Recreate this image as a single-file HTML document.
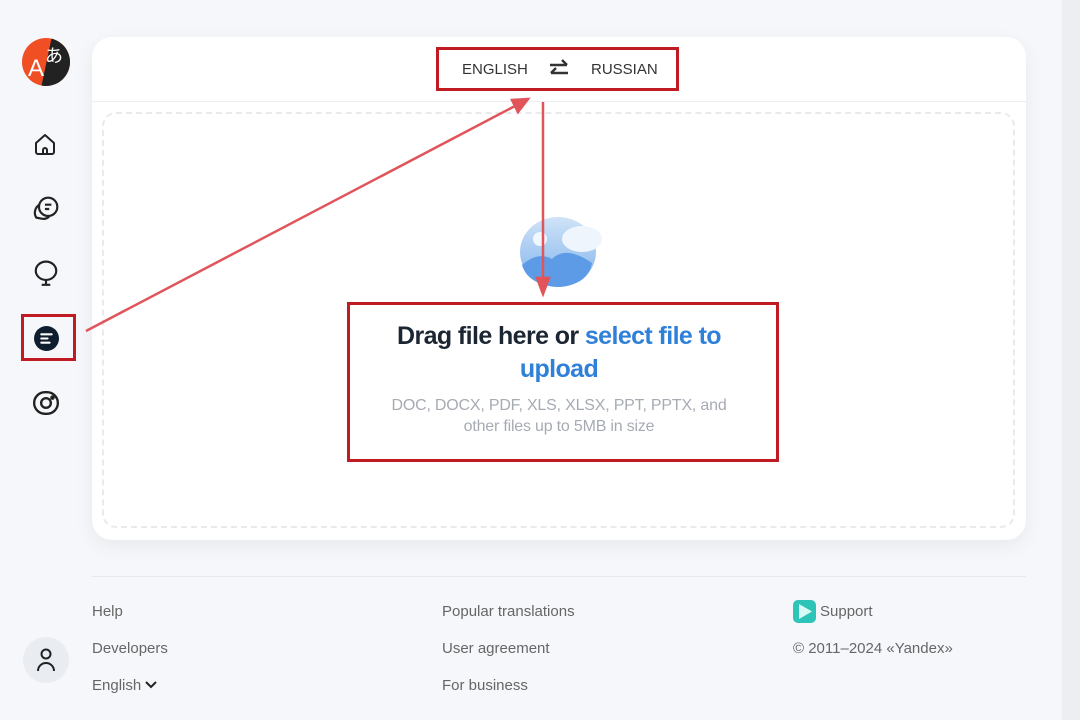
<!DOCTYPE html>
<html><head><meta charset="utf-8"><style>
body{margin:0;width:1080px;height:720px;background:#f5f7fa;font-family:"Liberation Sans",sans-serif;position:relative;overflow:hidden}
.sb{position:absolute;left:1062px;top:0;width:18px;height:720px;background:#eceef1}
.card{position:absolute;left:92px;top:37px;width:934px;height:503px;background:#fff;border-radius:20px;box-shadow:0 6px 20px rgba(0,0,0,.06)}
.hdr{position:absolute;left:0;top:0;width:934px;height:64px;border-bottom:1px solid #eceef1}
.dash{position:absolute;left:10px;top:75px;width:913px;height:416px;border:2px dashed #e8eaed;border-radius:14px;box-sizing:border-box}
.t{position:absolute;font-size:15px;color:#333}
.f{position:absolute;font-size:15px;color:#666}
.box{position:absolute;border:3px solid #c01a22;box-sizing:border-box}
</style></head><body>
<div class="sb"></div>
<svg style="position:absolute;left:22px;top:38px" width="48" height="48" viewBox="0 0 48 48">
<defs><clipPath id="c"><circle cx="24" cy="24" r="24"/></clipPath></defs>
<g clip-path="url(#c)"><rect width="48" height="48" fill="#f04e23"/><path d="M30 -2 L52 -2 L52 50 L19 50 Z" fill="#222"/></g>
<text x="6" y="38" font-size="24" fill="#fff" font-family="Liberation Sans">A</text>
<text x="23" y="24" font-size="18" fill="#fff" font-family="Noto Sans CJK JP,sans-serif">あ</text>
</svg>
<svg style="position:absolute;left:33px;top:133px" width="24" height="24" viewBox="0 0 24 24" fill="none" stroke="#222" stroke-width="2" stroke-linejoin="round"><path d="M3 10 L12 2 L21 10 V19 a2 2 0 0 1-2 2 H5 a2 2 0 0 1-2-2 Z"/><path d="M10 21 v-4 a2 2 0 0 1 4 0 v4"/></svg>
<svg style="position:absolute;left:32px;top:195px" width="28" height="28" viewBox="0 0 26 26" fill="none" stroke="#222" stroke-width="2"><circle cx="15" cy="11" r="8.5"/><path d="M12 9h6M12 13h4"/><path d="M7 9 a8.5 8.5 0 0 0 -3 12 l5 1 a8 8 0 0 0 7 -2"/></svg>
<svg style="position:absolute;left:33px;top:260px" width="26" height="28" viewBox="0 0 24 26" fill="none" stroke="#222" stroke-width="2"><ellipse cx="12" cy="10" rx="9.5" ry="8.5"/><path d="M12 18.5v4.5M8 23h8"/></svg>
<svg style="position:absolute;left:34px;top:326px" width="25" height="25" viewBox="0 0 24 24"><circle cx="12" cy="12" r="12" fill="#0f1e2e"/><path d="M7 8h10M7 12h6M7 16h8" stroke="#fff" stroke-width="2" stroke-linecap="round"/></svg>
<svg style="position:absolute;left:32px;top:389px" width="28" height="28" viewBox="0 0 26 26" fill="none" stroke="#222" stroke-width="2.2"><rect x="2" y="3" width="22" height="20" rx="10"/><circle cx="13" cy="13" r="4.5"/><circle cx="19" cy="8" r="1" fill="#222"/></svg>
<div style="position:absolute;left:23px;top:637px;width:46px;height:46px;border-radius:50%;background:#e9edf2"></div>
<svg style="position:absolute;left:35px;top:647px" width="22" height="26" viewBox="0 0 22 26" fill="none" stroke="#222" stroke-width="2"><circle cx="11" cy="7" r="4.5"/><path d="M3 24 a8 8 0 0 1 16 0"/></svg>
<div class="card">
<div class="hdr"></div>
<div class="t" style="left:370px;top:24px;color:#333">ENGLISH</div>
<svg style="position:absolute;left:456px;top:22px" width="22" height="20" viewBox="0 0 22 20" fill="none" stroke="#333" stroke-width="2.4"><path d="M2 6h17M14 1l5 5"/><path d="M20 14H3M8 9l-5 5"/></svg>
<div class="t" style="left:499px;top:24px">RUSSIAN</div>
<div class="dash"></div>
<svg style="position:absolute;left:426px;top:178px" width="92" height="74" viewBox="0 0 92 74"><defs><linearGradient id="g" x1="0" y1="0" x2="0" y2="1"><stop offset="0" stop-color="#cfe3f7"/><stop offset="1" stop-color="#7fb2ec"/></linearGradient></defs><ellipse cx="40" cy="37" rx="38" ry="35" fill="url(#g)"/><path d="M4 50 Q20 36 34 44 Q48 30 74 48 Q70 70 40 72 Q10 70 4 50Z" fill="#5d9be6"/><ellipse cx="64" cy="24" rx="20" ry="13" fill="#eef5fc"/><circle cx="22" cy="24" r="7" fill="#f2f7fd"/></svg>
<div style="position:absolute;left:282px;top:283px;width:370px;text-align:center;font-size:25px;line-height:33px;color:#1c2633;font-weight:bold;letter-spacing:-.6px">Drag file here or <span style="color:#2f80d8">select file to upload</span></div>
<div style="position:absolute;left:282px;top:358px;width:370px;text-align:center;font-size:16px;line-height:21px;color:#a6abb3;letter-spacing:-.2px">DOC, DOCX, PDF, XLS, XLSX, PPT, PPTX, and other files up to 5MB in size</div>
</div>
<div style="position:absolute;left:92px;top:576px;width:934px;height:1px;background:#e5e8ec"></div>
<div class="f" style="left:92px;top:603px">Help</div>
<div class="f" style="left:92px;top:640px">Developers</div>
<div class="f" style="left:92px;top:677px">English <svg width="12" height="10" viewBox="0 0 12 10"><path d="M1 2l5 5 5-5" fill="none" stroke="#222" stroke-width="2"/></svg></div>
<div class="f" style="left:442px;top:603px">Popular translations</div>
<div class="f" style="left:442px;top:640px">User agreement</div>
<div class="f" style="left:442px;top:677px">For business</div>
<svg style="position:absolute;left:793px;top:600px" width="23" height="23" viewBox="0 0 23 23"><rect width="23" height="23" rx="5" fill="#2fc4b8"/><path d="M6 4 L19 11.5 L6 19Z" fill="#d9fbf6"/></svg>
<div class="f" style="left:820px;top:603px">Support</div>
<div class="f" style="left:793px;top:640px">© 2011–2024 «Yandex»</div>
<div class="box" style="left:436px;top:47px;width:243px;height:44px"></div>
<div class="box" style="left:21px;top:314px;width:55px;height:47px"></div>
<div class="box" style="left:347px;top:302px;width:432px;height:160px"></div>
<svg style="position:absolute;left:0;top:0" width="1080" height="720"><g stroke="#e0545a" stroke-width="2.5" fill="#e0545a"><line x1="86" y1="331" x2="515" y2="106"/><path d="M528 99 L512 100 L518 112Z"/><line x1="543" y1="102" x2="543" y2="280"/><path d="M543 294 L537 278 L549 278Z"/></g></svg>
</body></html>
